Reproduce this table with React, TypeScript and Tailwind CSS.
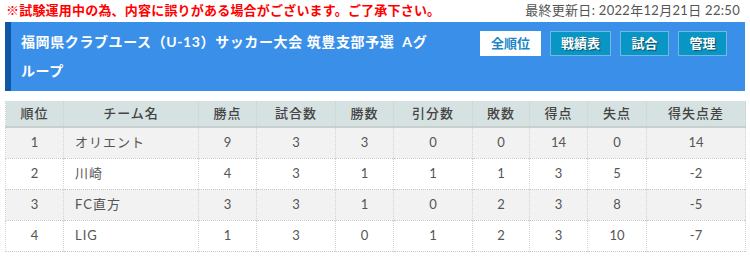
const ROWS = [
  { rank: 1, team: 'オリエント', pts: 9, played: 3, win: 3, draw: 0, lose: 0, gf: 14, ga: 0, gd: '14' },
  { rank: 2, team: '川崎', pts: 4, played: 3, win: 1, draw: 1, lose: 1, gf: 3, ga: 5, gd: '-2' },
  { rank: 3, team: 'FC直方', pts: 3, played: 3, win: 1, draw: 0, lose: 2, gf: 3, ga: 8, gd: '-5' },
  { rank: 4, team: 'LIG', pts: 1, played: 3, win: 0, draw: 1, lose: 2, gf: 3, ga: 10, gd: '-7' },
];

const HEADS = ['順位', 'チーム名', '勝点', '試合数', '勝数', '引分数', '敗数', '得点', '失点', '得失点差'];
const WIDTHS = ['w-[58px]', 'w-[135px]', 'w-[58px]', 'w-[79px]', 'w-[58px]', 'w-[79px]', 'w-[57px]', 'w-[58px]', 'w-[59px]', 'w-[99px]'];

const BUTTONS = ['戦績表', '試合', '管理'];

export default function App() {
  return (
    <div className="w-[750px] h-[258px] bg-white font-['Lato','Noto_Sans_CJK_JP',sans-serif] overflow-hidden">
      {/* notice line */}
      <div className="flex items-center justify-between h-[22px] pl-[6px] pr-[10px]">
        <span className="text-[13px] font-bold text-[#ff0000] tracking-[0.2px]">
          ※試験運用中の為、内容に誤りがある場合がございます。ご了承下さい。
        </span>
        <span className="text-[13px] text-[#555] tracking-[0.3px]">最終更新日: 2022年12月21日 22:50</span>
      </div>

      {/* title bar */}
      <div className="mx-[5px] h-[69px] flex justify-between bg-[#3a8fe9] border-l-[6px] border-[#0f57a6]">
        <h1 className="w-[428px] pl-[10px] pt-[5px] text-[14px] leading-[29px] font-bold text-white tracking-[0.6px] break-all">
          福岡県クラブユース（U-13）サッカー大会 筑豊支部予選&nbsp; Aグループ
        </h1>
        <div className="flex gap-[9px] pt-[9px] pr-[18px] items-start">
          <button className="w-[61px] h-[25px] bg-white text-[#1a86c8] text-[13px] font-bold">全順位</button>
          {BUTTONS.map((b) => (
            <button
              key={b}
              className={`${b.length === 3 ? 'w-[61px]' : 'w-[49px]'} h-[25px] bg-[#0a96c4] border border-[#72b9e2] text-white text-[13px] font-bold [text-shadow:1px_1px_1px_rgba(0,0,0,0.5)]`}
            >
              {b}
            </button>
          ))}
        </div>
      </div>

      {/* standings */}
      <table className="mt-[10px] ml-[5px] w-[740px] border-collapse table-fixed text-[13px] text-[#555]">
        <thead>
          <tr className="h-[26px] bg-[#d6e1e1] border-b-2 border-[#c9cfcf]">
            {HEADS.map((h, i) => (
              <th key={h} className={`${WIDTHS[i]} font-medium text-[#444] tracking-[1px] border-x border-dotted border-[#c8d2d2]`}>
                {h}
              </th>
            ))}
          </tr>
        </thead>
        <tbody>
          {ROWS.map((r, idx) => (
            <tr key={r.rank} className={`h-[31px] border-b border-dotted border-[#c8c8c8] ${idx % 2 === 0 ? 'bg-[#f2f2f2]' : 'bg-white'}`}>
              <td className="text-center border-x border-dotted border-[#d4d4d4]">{r.rank}</td>
              <td className="pl-[11px] tracking-[1px] border-x border-dotted border-[#d4d4d4]">{r.team}</td>
              <td className="text-center border-x border-dotted border-[#d4d4d4]">{r.pts}</td>
              <td className="text-center border-x border-dotted border-[#d4d4d4]">{r.played}</td>
              <td className="text-center border-x border-dotted border-[#d4d4d4]">{r.win}</td>
              <td className="text-center border-x border-dotted border-[#d4d4d4]">{r.draw}</td>
              <td className="text-center border-x border-dotted border-[#d4d4d4]">{r.lose}</td>
              <td className="text-center border-x border-dotted border-[#d4d4d4]">{r.gf}</td>
              <td className="text-center border-x border-dotted border-[#d4d4d4]">{r.ga}</td>
              <td className="text-center border-x border-dotted border-[#d4d4d4]">{r.gd}</td>
            </tr>
          ))}
        </tbody>
      </table>
    </div>
  );
}
